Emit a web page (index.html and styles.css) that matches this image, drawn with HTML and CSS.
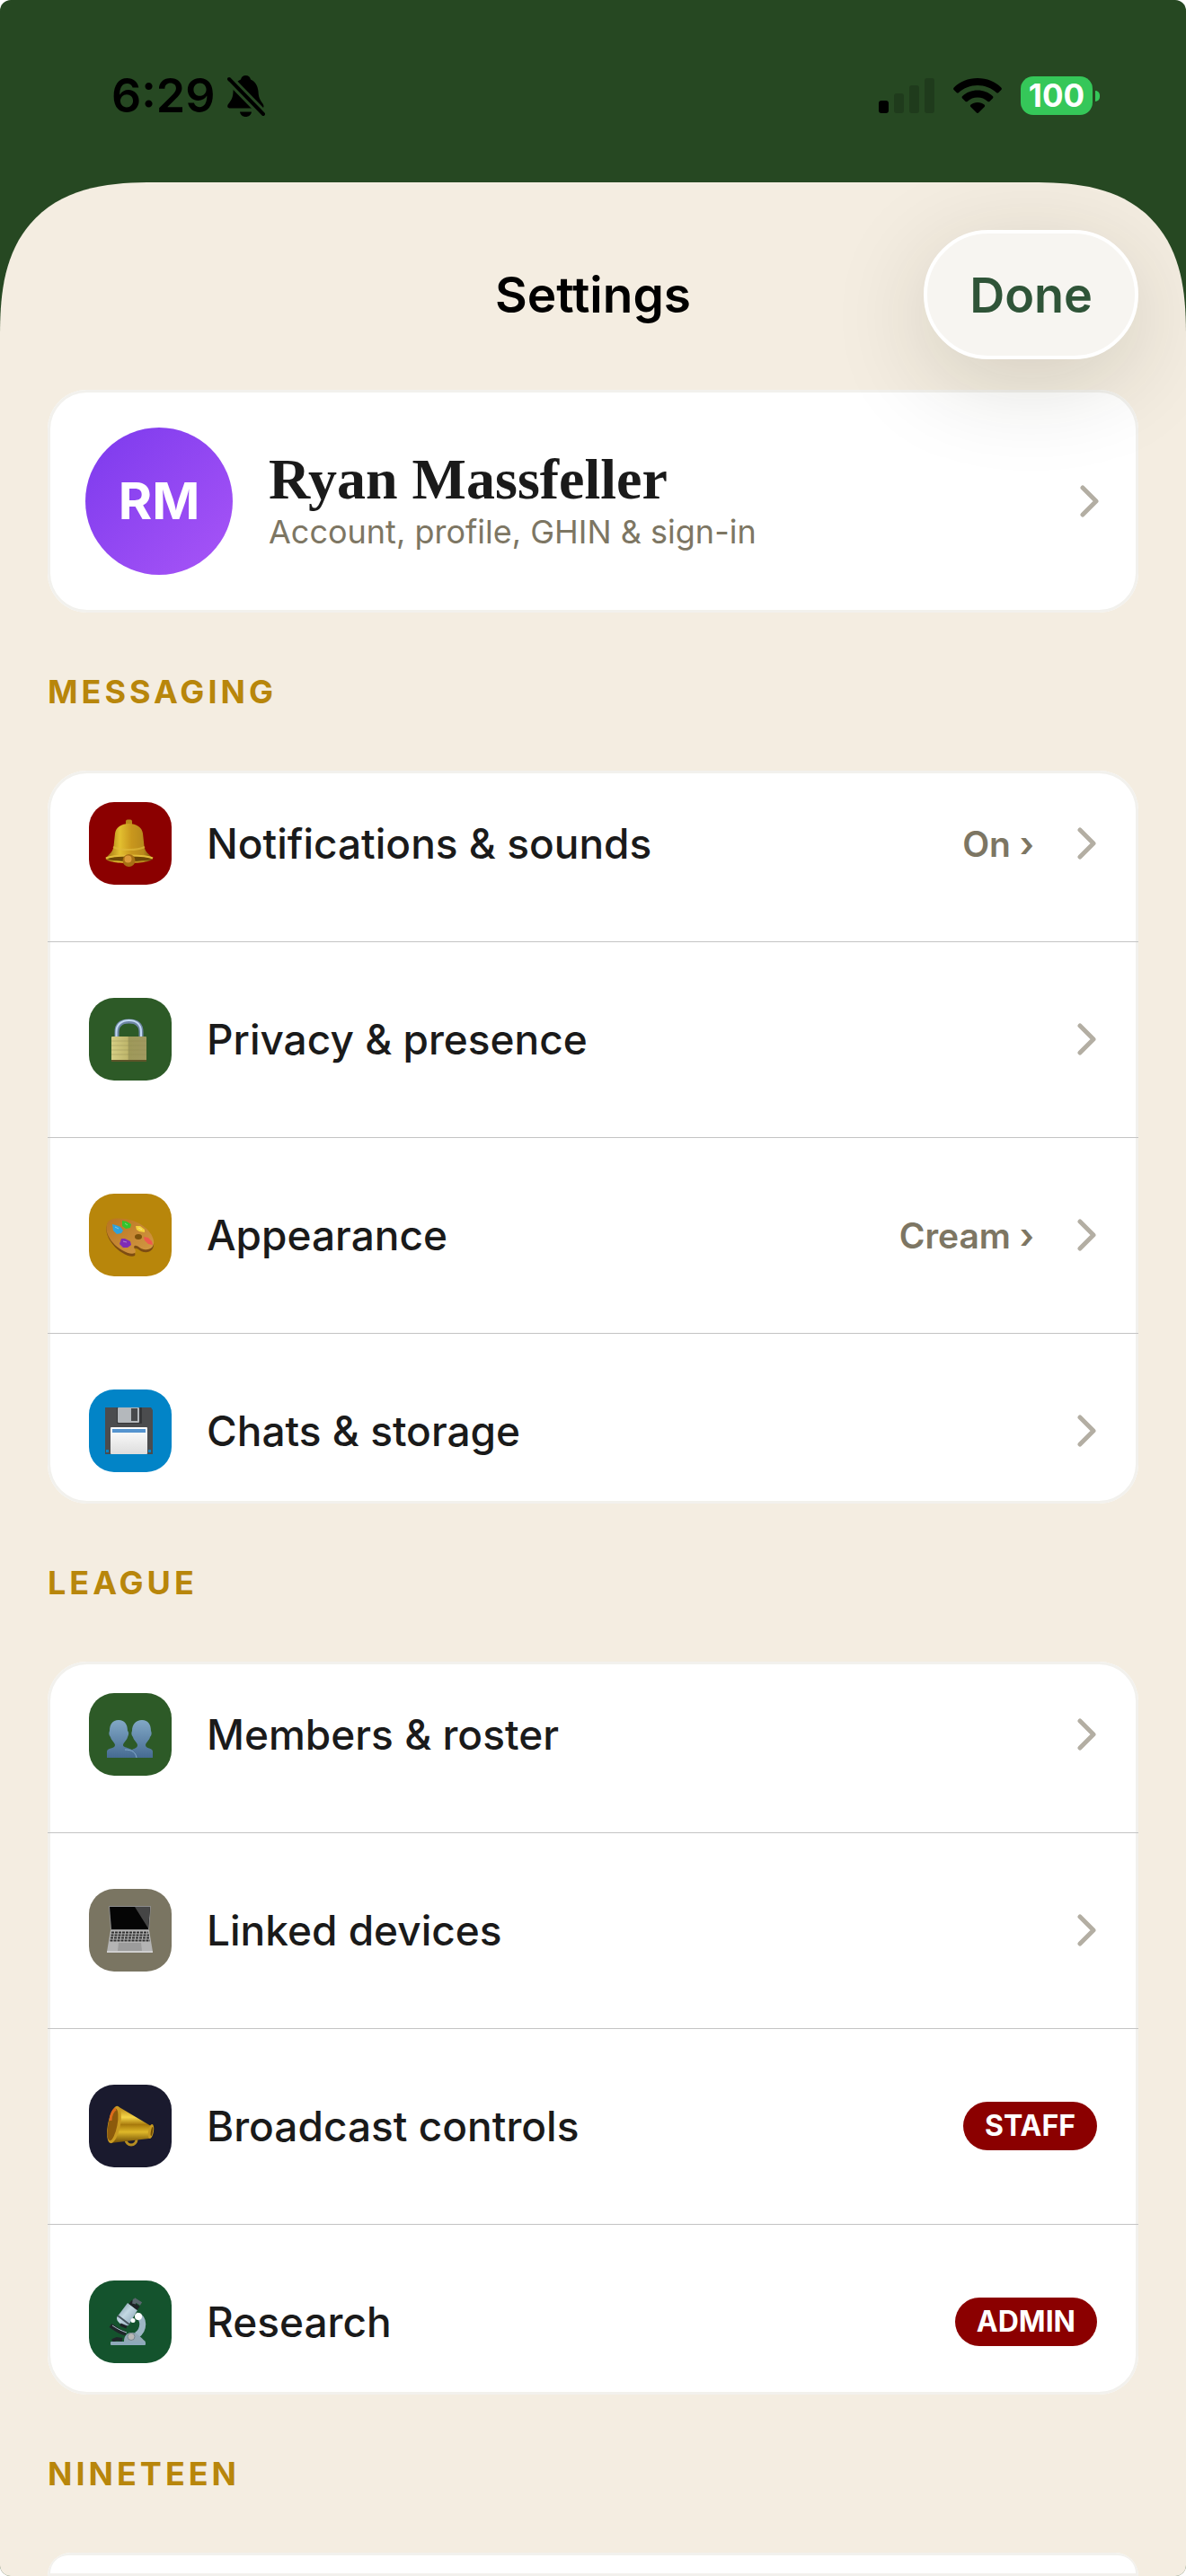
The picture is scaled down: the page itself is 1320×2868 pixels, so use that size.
FILE: index.html
```html
<!DOCTYPE html>
<html lang="en">
<head>
    <meta charset="UTF-8">
    <meta name="viewport" content="width=device-width, initial-scale=1.0">
    <title>Settings</title>
    <link rel="stylesheet" href="styles.css">
</head>
<body>
<svg class="defs" width="0" height="0" aria-hidden="true">
    <defs>
        <symbol id="chevron" viewBox="0 0 22 36">
            <path d="M3 3 L18 18 L3 33" fill="none" stroke="currentColor" stroke-width="5" stroke-linecap="round" stroke-linejoin="round"/>
        </symbol>
        <linearGradient id="bellGold">
            <stop offset="0" stop-color="#9a6a10"/>
            <stop offset=".3" stop-color="#e3c030"/>
            <stop offset=".55" stop-color="#c9971d"/>
            <stop offset=".8" stop-color="#b88a1c"/>
            <stop offset="1" stop-color="#6f4a08"/>
        </linearGradient>
        <linearGradient id="hornGold" x1="0" y1="0" x2="0" y2="1">
            <stop offset="0" stop-color="#b07c10"/>
            <stop offset=".3" stop-color="#f5d548"/>
            <stop offset=".5" stop-color="#a87a0c"/>
            <stop offset=".7" stop-color="#dfb829"/>
            <stop offset="1" stop-color="#6d4a05"/>
        </linearGradient>
        <linearGradient id="brass">
            <stop offset="0" stop-color="#d5ce84"/>
            <stop offset=".46" stop-color="#bfb66c"/>
            <stop offset=".5" stop-color="#9f995a"/>
            <stop offset="1" stop-color="#a19a60"/>
        </linearGradient>
        <linearGradient id="wood" x1="0" y1="0" x2="1" y2="1">
            <stop offset="0" stop-color="#b87420"/>
            <stop offset="1" stop-color="#d49a45"/>
        </linearGradient>
        <linearGradient id="people" x1="0" y1="0" x2="0" y2="1">
            <stop offset="0" stop-color="#82a8c6"/>
            <stop offset="1" stop-color="#466b92"/>
        </linearGradient>
        <linearGradient id="steel" x1="0" y1="0" x2="1" y2="1">
            <stop offset="0" stop-color="#6d8797"/>
            <stop offset=".45" stop-color="#c3d8e3"/>
            <stop offset="1" stop-color="#7e9aab"/>
        </linearGradient>
        <linearGradient id="paper" x1="0" y1="0" x2="0" y2="1">
            <stop offset="0" stop-color="#ffffff"/>
            <stop offset="1" stop-color="#dddddd"/>
        </linearGradient>
    </defs>
</svg>

<div class="app">
    <div class="status">
        <div class="status-left">
            <span class="time">6:29</span>
            <svg class="mute" viewBox="0 0 42 46" aria-hidden="true">
                <path d="M20.500 0c3 0 5 2 5.500 4.500C31.500 7 34 12 34.500 18c.3 6 1.500 9 5 13.500 1.500 2 1.500 5-1 5H3c-3 0-3.500-2.500-2-4.500C5 27 6.300 24 6.500 18 7 11 9.500 7 15 4.500 15.500 2 17.500 0 20.500 0zM14 40.500h13c-.5 3.300-3 5.500-6.500 5.500s-6-2.200-6.500-5.500z"/>
                <path d="M2 4 L40 43" stroke="#264822" stroke-width="10"/>
                <path d="M2 4 L40 43" stroke="#000" stroke-width="4" stroke-linecap="round"/>
            </svg>
        </div>
        <div class="status-right">
            <svg class="signal" viewBox="0 0 62 39" aria-hidden="true">
                <rect x="0" y="25" width="11" height="14" rx="3"/>
                <g fill="#1f3b1c">
                    <rect x="17" y="17" width="11" height="22" rx="3"/>
                    <rect x="34" y="8" width="11" height="31" rx="3"/>
                    <rect x="51" y="0" width="11" height="39" rx="3"/>
                </g>
            </svg>
            <svg class="wifi" viewBox="0 0 54 39" aria-hidden="true">
                <path d="M27 0c10.500 0 19.500 4 26.300 10.400.8.800.8 1.800.1 2.600l-3 3c-.8.800-1.700.8-2.500 0C42.500 11 35 8 27 8S11.500 11 6.100 16c-.8.800-1.700.8-2.500 0l-3-3c-.7-.8-.7-1.800.1-2.600C7.500 4 16.500 0 27 0z"/>
                <path d="M27 13.500c6.500 0 12.300 2.400 16.800 6.400.8.700.8 1.800.1 2.600l-3.300 3.300c-.7.700-1.700.7-2.500 0-3-2.700-6.800-4.200-11.100-4.200s-8.100 1.500-11.100 4.200c-.8.700-1.800.7-2.500 0l-3.300-3.300c-.7-.8-.7-1.900.1-2.600C14.700 15.900 20.500 13.500 27 13.500z"/>
                <path d="M27 27c3 0 5.500 1 7.500 2.600.8.700.8 1.700.1 2.500l-6.200 6.200c-.8.800-2 .8-2.800 0l-6.200-6.200c-.7-.8-.7-1.800.1-2.500C21.500 28 24 27 27 27z"/>
            </svg>
            <div class="battery"><span>100</span></div>
        </div>
    </div>

    <main class="sheet">
        <header class="header">
            <h1>Settings</h1>
            <button class="done" type="button">Done</button>
        </header>

        <a class="card profile" href="#">
            <span class="avatar">RM</span>
            <span class="who">
                <span class="name">Ryan Massfeller</span>
                <span class="sub">Account, profile, GHIN &amp; sign-in</span>
            </span>
            <svg class="chevron"><use href="#chevron"/></svg>
        </a>

        <h2>MESSAGING</h2>
        <nav class="card">
            <a class="row" href="#">
                <svg class="tile red" viewBox="0 0 92 92">
                    <rect x="41" y="19.500" width="7" height="7" rx="2" fill="#b98a1a"/>
                    <path d="M44.500 24C53 24 59 28 60 35L61.500 49C62.500 56 67 58 71 62.500 71 66 58 68 44.500 68S18 66 18.500 62.500C22.500 58 26.500 56 27.500 49L29 35C30 28 36 24 44.500 24z" fill="url(#bellGold)"/>
                    <path d="M27 50c8 4 27 4 35 0" fill="none" stroke="#e0b93a" stroke-width="2" opacity=".7"/>
                    <ellipse cx="45" cy="63" rx="24" ry="3" fill="#6d4706"/>
                    <path d="M19 62.500c8-4 44-4 52 0" fill="none" stroke="#e3bd3a" stroke-width="2"/>
                    <circle cx="44.500" cy="65" r="7" fill="#a86f14"/>
                    <circle cx="43.500" cy="63.500" r="4" fill="#dc9a3a"/>
                </svg>
                <span class="label">Notifications &amp; sounds</span>
                <span class="value">On ›</span>
                <svg class="chevron"><use href="#chevron"/></svg>
            </a>
            <a class="row" href="#">
                <svg class="tile green" viewBox="0 0 92 92">
                    <path d="M31 44V38C31 29 37 26 44.500 26S58 29 58 38V44" fill="none" stroke="#6e86a5" stroke-width="5"/>
                    <path d="M30.500 44V38C30.500 29 37 25 44.500 25S58 29 58 38V44" fill="none" stroke="#c3d9f3" stroke-width="2"/>
                    <rect x="25" y="43" width="39" height="28" rx="1" fill="url(#brass)"/>
                    <path d="M25 48h39M25 53h39M25 58h39M25 63h39" stroke="#8f8850" stroke-width="1" opacity=".4"/>
                    <path d="M25 70h39" stroke="#5d5428" stroke-width="2"/>
                </svg>
                <span class="label">Privacy &amp; presence</span>
                <svg class="chevron"><use href="#chevron"/></svg>
            </a>
            <a class="row" href="#">
                <svg class="tile gold" viewBox="0 0 92 92">
                    <path d="M20 35C22 28 31 28 40 29 56 31 70 42 72 54 73 62 68 66 61 65 56 64 54 60 51 61 48 62 53 67 51 69 46 72 33 65 27 57 21 50 18 42 20 35z" fill="#7d4c12"/>
                    <path d="M20 34C22 27 31 27 40 28 56 30 70 41 72 52 73 60 68 63 61 62 56 61 54 57 51 58 48 59 54 64 51 66 46 69 33 62 27 55 21 48 18 41 20 34z" fill="url(#wood)"/>
                    <ellipse cx="55" cy="48" rx="4" ry="3" fill="#7d520c"/>
                    <path d="M26 34l4 1 5 2 3 4-2 3-5 1-4-4z" fill="#2ea2dc"/>
                    <path d="M37 30l5 1 5 3-1 4-5 1-4-3z" fill="#35c52c"/>
                    <path d="M52 36l5 0 5 4 0 3-6-1-3-2z" fill="#f4d23c"/>
                    <path d="M61 48l5 1 4 4 1 4-5-1-4-4z" fill="#ee5a4d"/>
                    <path d="M36 50l4 0 6 3 1 4-4 3-5 0-4-4z" fill="#7f2cb5"/>
                    <path d="M29 37l4 2M40 33l3 2M38 53l4 1M55 38l4 2" stroke="#fff" stroke-width="1" opacity=".4"/>
                </svg>
                <span class="label">Appearance</span>
                <span class="value">Cream ›</span>
                <svg class="chevron"><use href="#chevron"/></svg>
            </a>
            <a class="row" href="#">
                <svg class="tile blue" viewBox="0 0 92 92">
                    <path d="M18 20H69L71 23V72H18z" fill="#4b4c4e"/>
                    <rect x="31" y="20" width="28" height="18" rx="1" fill="#353638"/>
                    <rect x="32" y="20" width="24" height="17" rx="1" fill="#b4b8bc"/>
                    <rect x="47" y="21" width="7" height="14" fill="#48494b"/>
                    <rect x="24" y="42" width="41" height="30" rx="1" fill="url(#paper)"/>
                    <rect x="26" y="44" width="37" height="4" fill="#5594cf"/>
                    <path d="M19 67h3v3h-3zM66 67h3v3h-3z" fill="#0a83c4"/>
                </svg>
                <span class="label">Chats &amp; storage</span>
                <svg class="chevron"><use href="#chevron"/></svg>
            </a>
        </nav>

        <h2>LEAGUE</h2>
        <nav class="card">
            <a class="row" href="#">
                <svg class="tile green" viewBox="0 0 92 92">
                    <path d="M59 30C66 30 69 35 69 42 70 44 70 47 68 49 67 53 63 55 63 58 63 62 71 61 71 65V72H44V66C49 61 54 62 54 58 54 55 50 53 49 49 47 47 47 44 48 42 48 35 52 30 59 30z" fill="url(#people)"/>
                    <path d="M33 30C40 30 43 35 43 42 45 44 44 47 43 49 42 53 38 55 38 58 38 62 53 60 53 72H20V65C20 61 29 62 29 58 29 55 25 53 24 49 22 47 22 44 23 42 23 35 26 30 33 30z" fill="url(#people)"/>
                    <path d="M40 63c8 0 12 3 13 9" fill="none" stroke="#83a9c8" stroke-width="1"/>
                </svg>
                <span class="label">Members &amp; roster</span>
                <svg class="chevron"><use href="#chevron"/></svg>
            </a>
            <a class="row" href="#">
                <svg class="tile taupe" viewBox="0 0 92 92">
                    <path d="M22 19H69L67 46H24z" fill="#8b8b8b"/>
                    <path d="M23 20H68L66 45H25z" fill="#050505"/>
                    <path d="M51 20H68L66 44z" fill="#454545"/>
                    <path d="M24 46H67L71 70H20z" fill="#b4b4b4"/>
                    <path d="M25 48.500H66M24.500 51.500H67M24 54.500H67.500M23.500 57.500H68" stroke="#303030" stroke-width="2" stroke-dasharray="3 1"/>
                    <path d="M33 60H58L59 69H32z" fill="#9c9c9c"/>
                    <path d="M20 69H71V71H20z" fill="#d0d0d0"/>
                </svg>
                <span class="label">Linked devices</span>
                <svg class="chevron"><use href="#chevron"/></svg>
            </a>
            <a class="row" href="#">
                <svg class="tile navy" viewBox="0 0 92 92">
                    <circle cx="47" cy="61" r="6" fill="none" stroke="#b58d22" stroke-width="3"/>
                    <path d="M32 24L69 46C72 48 72 58 67 60L24 65z" fill="url(#hornGold)"/>
                    <ellipse cx="28" cy="44.500" rx="7" ry="21" transform="rotate(11 28 44.500)" fill="#c99a22"/>
                    <ellipse cx="26.500" cy="44.500" rx="5" ry="18" transform="rotate(11 26.500 44.500)" fill="#8c5a0c"/>
                    <path d="M24 40c0-6 3-12 6-13" fill="none" stroke="#db6b1c" stroke-width="3"/>
                    <ellipse cx="69" cy="52" rx="3" ry="8" transform="rotate(10 69 52)" fill="#c79a1f"/>
                    <ellipse cx="70" cy="52" rx="1" ry="5" transform="rotate(10 70 52)" fill="#6d4a05"/>
                </svg>
                <span class="label">Broadcast controls</span>
                <span class="badge">STAFF</span>
            </a>
            <a class="row" href="#">
                <svg class="tile forest" viewBox="0 0 92 92">
                    <path d="M53 39C62 41 62 55 53 61" fill="none" stroke="#9db6c4" stroke-width="7"/>
                    <path d="M24 50C30 54 34 58 41 59" fill="none" stroke="#1f2629" stroke-width="5"/>
                    <path d="M26 50C32 54 36 56 42 58" fill="none" stroke="#a9bdc8" stroke-width="1"/>
                    <path d="M26 67l5-2 6 1" fill="none" stroke="#1f2629" stroke-width="4"/>
                    <path d="M43 25L54 33 44 50C38 52 30 46 31 41z" fill="url(#steel)"/>
                    <path d="M32 39l13 10" stroke="#45545d" stroke-width="2"/>
                    <path d="M46 24L55 31" stroke="#1d2326" stroke-width="5"/>
                    <path d="M51 21l-1 5M50 21l8 5" stroke="#59666d" stroke-width="4"/>
                    <path d="M35 49l7 3" stroke="#1d2326" stroke-width="3"/>
                    <path d="M39 68C39 61 43 58 48 58 54 58 57 63 63 68z" fill="#93a9b6"/>
                    <circle cx="47" cy="62.500" r="4" fill="#b9b9b7" stroke="#75848d" stroke-width="1"/>
                    <rect x="24" y="68" width="39" height="4" rx="1" fill="#8ea9ba"/>
                    <circle cx="55" cy="40" r="4" fill="#fff"/>
                    <circle cx="49" cy="44.500" r="2.500" fill="#fff"/>
                </svg>
                <span class="label">Research</span>
                <span class="badge">ADMIN</span>
            </a>
        </nav>

        <h2>NINETEEN</h2>
        <nav class="card next"></nav>
    </main>
</div>
</body>
</html>
```
FILE: styles.css
```css
* {
    box-sizing: border-box;
}

body {
    margin: 0;
    background: #fff;
    font-family: Inter, "Liberation Sans", sans-serif;
    color: #1a1a1a;
}

a {
    color: inherit;
    text-decoration: none;
}

.defs {
    position: absolute;
}

.app {
    display: flex;
    flex-direction: column;
    height: 100vh;
    background: #264822;
    border-radius: 12px;
    overflow: hidden;
}

/* status bar */
.status {
    display: flex;
    flex: none;
    justify-content: space-between;
    align-items: center;
    height: 203px;
    padding: 10px 96px 0 124px;
    color: #000;
}

.status-left,
.status-right {
    display: flex;
    align-items: center;
}

.status-left {
    gap: 13px;
}

.status-right {
    gap: 21px;
}

.time {
    font-size: 52px;
    font-weight: 600;
}

.mute {
    width: 42px;
    height: 46px;
}

.signal {
    width: 62px;
    height: 39px;
}

.wifi {
    width: 54px;
    height: 39px;
}

.battery {
    position: relative;
    width: 80px;
    height: 43px;
    margin-right: 8px;
    border-radius: 14px;
    background: #35c759;
    color: #fff;
    font-size: 35px;
    font-weight: 700;
    line-height: 43px;
    text-align: center;
}

.battery::after {
    content: "";
    position: absolute;
    right: -8px;
    top: 16px;
    width: 5px;
    height: 12px;
    border-radius: 0 5px 5px 0;
    background: #35c759;
}

/* sheet */
.sheet {
    display: flex;
    flex: 1;
    flex-direction: column;
    min-height: 0;
    padding: 0 53px;
    background: #f4ede1;
    border-radius: 128px 128px 0 0;
    overflow: hidden;
}

.header {
    display: grid;
    flex: none;
    grid-template-columns: 1fr auto 1fr;
    align-items: center;
    height: 231px;
    padding-top: 19px;
}

h1 {
    grid-column: 2;
    margin: 0;
    color: #000;
    font-size: 55px;
    font-weight: 600;
}

.done {
    position: relative;
    z-index: 1;
    justify-self: end;
    height: 144px;
    padding: 0 47px;
    border: 4px solid #fff;
    border-radius: 72px;
    background: #f7f5f1;
    box-shadow: 0 24px 110px rgba(40, 36, 10, .16);
    color: #2f5438;
    font-family: inherit;
    font-size: 54px;
    font-weight: 600;
}

.card {
    flex: none;
    border-radius: 44px;
    background: #fff;
    box-shadow: inset 0 0 0 3px #f2f1ed;
    overflow: hidden;
}

.profile {
    display: flex;
    align-items: center;
    height: 248px;
    padding: 0 43px 0 42px;
}

.avatar {
    width: 164px;
    height: 164px;
    margin-right: 40px;
    border-radius: 50%;
    background: linear-gradient(135deg, #7c3aed, #a855f7);
    color: #fff;
    font-size: 57px;
    font-weight: 700;
    line-height: 164px;
    text-align: center;
}

.who {
    display: flex;
    flex: 1;
    flex-direction: column;
}

.name {
    font-family: "Liberation Serif", serif;
    font-size: 64px;
    font-weight: 700;
    line-height: 68px;
}

.sub {
    color: #7d7663;
    font-size: 36px;
    line-height: 48px;
}

.chevron {
    flex: none;
    width: 22px;
    height: 36px;
    color: #b3aea3;
}

h2 {
    flex: none;
    margin: 0;
    padding-top: 64px;
    height: 176px;
    color: #b8860b;
    font-size: 36px;
    font-weight: 700;
    line-height: 48px;
    letter-spacing: 4px;
}

.row {
    display: flex;
    align-items: center;
    padding: 62px 46px 63px;
    border-bottom: 1px solid #c4c4c4;
}

.row:first-child {
    padding-top: 35px;
}

.row:last-child {
    padding-bottom: 35px;
    border-bottom: 0;
}

.tile {
    flex: none;
    width: 92px;
    height: 92px;
    margin-right: 39px;
    border-radius: 28px;
}

.red { background: #8b0000; }
.green { background: #2d5a27; }
.gold { background: #b8860b; }
.blue { background: #0284c7; }
.taupe { background: #7a7562; }
.navy { background: #1a1a2e; }
.forest { background: #14532d; }

.label {
    flex: 1;
    font-size: 46px;
    font-weight: 500;
}

.value {
    margin-right: 48px;
    color: #7d7663;
    font-size: 39px;
    font-weight: 600;
}

.badge {
    padding: 0 24px;
    border-radius: 27px;
    background: #8b0000;
    color: #fff;
    font-size: 32px;
    font-weight: 700;
    line-height: 54px;
}

/* runs on below the fold */
.next {
    flex: 1 0 26px;
    border-radius: 44px 44px 0 0;
}

@supports (corner-shape: superellipse(1.4)) {
    .sheet {
        border-radius: 172px 172px 0 0;
        corner-shape: superellipse(1.4);
    }
}
```
